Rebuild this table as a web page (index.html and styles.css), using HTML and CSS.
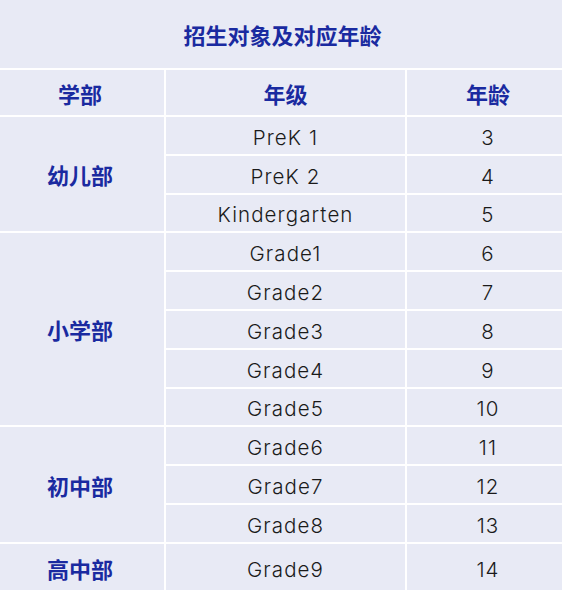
FILE: index.html
```html
<!DOCTYPE html>
<html lang="zh-CN">
<head>
<meta charset="utf-8">
<title>招生对象及对应年龄</title>
<link rel="stylesheet" href="styles.css">
</head>
<body>
<div class="table">
  <div class="cell title">招生对象及对应年龄</div>
  <div class="cell head">学部</div>
  <div class="cell head">年级</div>
  <div class="cell head">年龄</div>

  <div class="cell dept span3">幼儿部</div>
  <div class="cell val">PreK 1</div><div class="cell val">3</div>
  <div class="cell val">PreK 2</div><div class="cell val">4</div>
  <div class="cell val">Kindergarten</div><div class="cell val">5</div>

  <div class="cell dept span5">小学部</div>
  <div class="cell val">Grade1</div><div class="cell val">6</div>
  <div class="cell val">Grade2</div><div class="cell val">7</div>
  <div class="cell val">Grade3</div><div class="cell val">8</div>
  <div class="cell val">Grade4</div><div class="cell val">9</div>
  <div class="cell val">Grade5</div><div class="cell val">10</div>

  <div class="cell dept span3">初中部</div>
  <div class="cell val">Grade6</div><div class="cell val">11</div>
  <div class="cell val">Grade7</div><div class="cell val">12</div>
  <div class="cell val">Grade8</div><div class="cell val">13</div>

  <div class="cell dept">高中部</div>
  <div class="cell val">Grade9</div><div class="cell val">14</div>
</div>
</body>
</html>
```
FILE: styles.css
```css
html, body {
  margin: 0;
  padding: 0;
  background: #e8eaf5;
  overflow: hidden;
}
.table {
  display: grid;
  grid-template-columns: 168px 239px 162px;
  grid-template-rows: 68px 45px repeat(11, 36.8px) 48px;
  gap: 2px;
  background: #ffffff;
  width: 573px;
  margin-left: -4px;
}
.cell {
  background: #e8eaf5;
  display: flex;
  align-items: center;
  justify-content: center;
}
.title {
  grid-column: 1 / -1;
  font-family: "Noto Sans CJK SC", sans-serif;
  font-weight: 700;
  font-size: 22px;
  color: #1a2aa0;
}
.head, .dept {
  font-family: "Noto Sans CJK SC", sans-serif;
  font-weight: 700;
  font-size: 22px;
  color: #1a2aa0;
}
.dept { grid-column: 1; }
.span3 { grid-row: span 3; }
.span5 { grid-row: span 5; }
.val {
  font-family: Inter, "Noto Sans CJK SC", sans-serif;
  font-weight: 300;
  font-size: 20.5px;
  letter-spacing: 1.1px;
  color: #1a1a1a;
  padding-top: 4px;
  box-sizing: border-box;
}
```
